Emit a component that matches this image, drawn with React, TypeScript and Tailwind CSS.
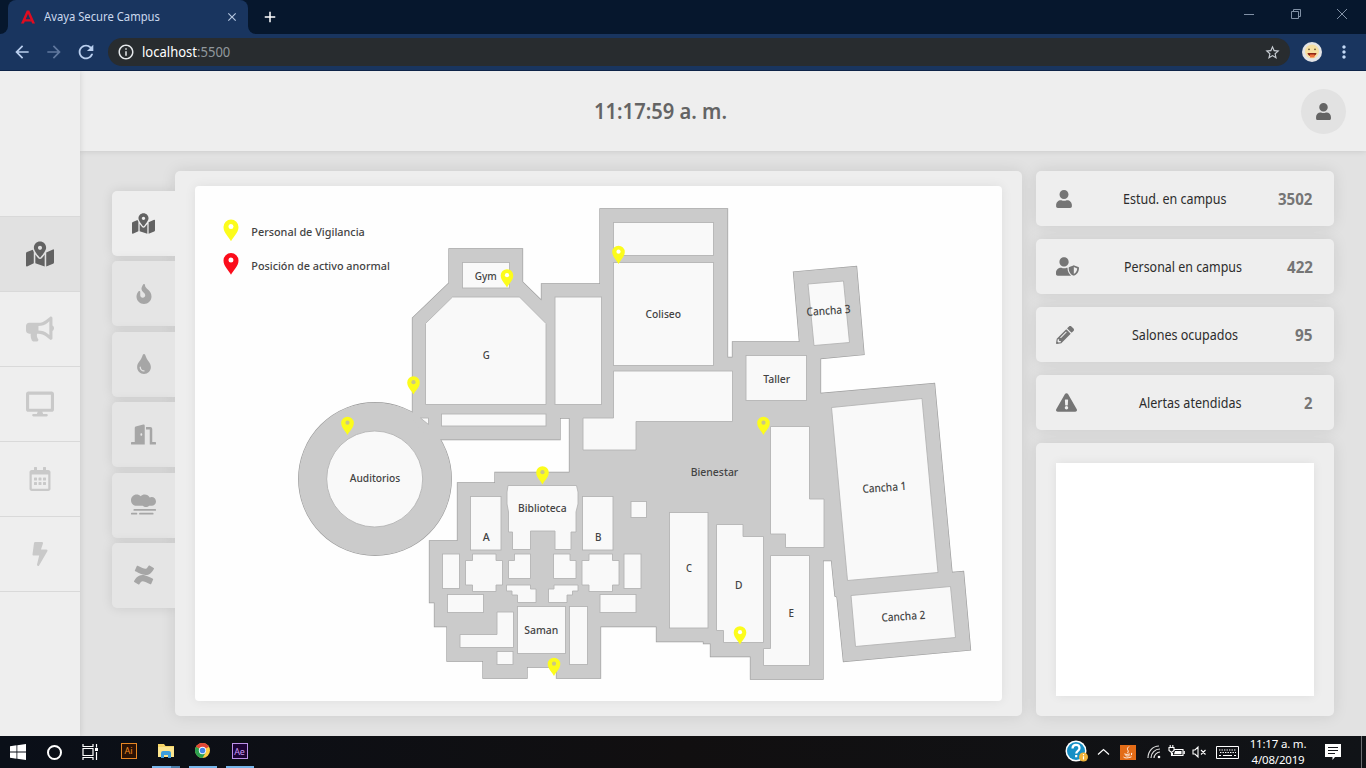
import React from "react";
import {
  FaMapMarkedAlt, FaBullhorn, FaDesktop, FaRegCalendarAlt, FaBolt, FaFire, FaTint, FaDoorOpen,
  FaSmog, FaConfluence, FaUser, FaUserShield, FaPencilAlt, FaExclamationTriangle,
} from "react-icons/fa";
import { MdArrowBack, MdArrowForward, MdRefresh, MdInfoOutline, MdStarBorder, MdMoreVert, MdClose, MdAdd } from "react-icons/md";

const WALL = "#cbcbcb";
const EDGE = "#9e9e9e";

const campus =
  "449,249 522.5,249 522.5,282 541.5,300.5 541.5,284 600,284 600,209 727.5,209 727.5,357.5 732.5,357.5 732.5,342 799.5,342 793.5,272 856.5,266.5 864,354.5 820.5,358.5 820.5,393.5 934.5,383.5 952,572.5 963.5,571.5 970.5,650 843.5,661.5 837,597 835,596 831.5,560.5 823,560.5 823,679 750.5,679 750.5,656.5 710.5,656.5 710.5,643.5 703.5,643.5 703.5,641.5 656.5,641.5 656.5,626.5 600.5,626.5 600.5,678 556.5,678 556.5,667 527,667 527,678 483,678 483,661 447,661 447,626.5 434.5,626.5 434.5,602.5 429.5,602.5 429.5,541 457.5,541 457.5,483 495,483 495,472.5 569.5,472.5 569.5,418 560,418 560,439.5 430,439.5 412.5,420 412.5,318 449,283";

const rooms: string[] = [
  "452.5,297 519.5,297 546,323.5 546,404.5 425.5,404.5 425.5,323.5",
  "613.5,371 732.5,371 732.5,421.5 636,421.5 636,450 583,450 583,418 613.5,418",
  "808,284 843.5,281 849.5,342.5 814,345.5",
  "831.5,407.5 922,398.5 938,572.5 847.5,580.5",
  "851,595.5 950.5,586.5 955.5,637.5 855.5,646.5",
  "770.5,426.5 809.5,426.5 809.5,499 824,499 824,547.5 785.5,547.5 785.5,534 770.5,534",
  "716.5,524.5 743,524.5 743,536.5 763.5,536.5 763.5,642.5 723.5,642.5 723.5,630.5 716.5,630.5",
  "770.5,555.5 809.5,555.5 809.5,665.5 763.5,665.5 763.5,648.5 770.5,648.5",
  "508,485.5 576.5,485.5 578,492 578,504 576,512 576,532 571,532 571,549.5 555,549.5 555,531 530.5,531 530.5,549.5 512.5,549.5 512.5,532 508.5,532 508.5,512 507,504 507,492",
  "472.5,554 496,554 496,560.5 502.5,560.5 502.5,585 496,585 496,591.5 472.5,591.5 472.5,585 465.5,585 465.5,560.5 472.5,560.5",
  "589,554 612.5,554 612.5,560.5 619,560.5 619,585 612.5,585 612.5,591.5 589,591.5 589,585 582,585 582,560.5 589,560.5",
  "514.5,554 530.5,554 530.5,578.5 508.5,578.5 508.5,560.5 514.5,560.5",
  "553.5,554 570,554 570,560.5 576,560.5 576,578.5 553.5,578.5",
  "506.5,585 530.5,585 530.5,589 536,589 536,602.5 517.5,602.5 517.5,595 512,595 512,591 506.5,591",
  "578,585 554,585 554,589 548.5,589 548.5,602.5 567,602.5 567,595 572.5,595 572.5,591 578,591",
  "497,612 513.5,612 513.5,647.5 460,647.5 460,634.5 497,634.5",
];

// x1, y1, x2, y2
const boxes: number[][] = [
  [462.5, 262.5, 509.5, 288], [555, 297, 601.5, 404.5], [441.5, 414, 546, 426],
  [613.5, 222.5, 713.5, 255.5], [613.5, 262.5, 713.5, 365.5], [746, 355.5, 806.5, 400.5],
  [669.5, 512.5, 708, 628], [470.5, 496.5, 501, 550], [582.5, 496.5, 613, 550],
  [631, 501.5, 646.5, 517.5], [442.5, 554, 459.5, 588.5], [624, 554, 641, 588.5],
  [447.5, 594.5, 483.5, 612.5], [600, 594.5, 636, 612.5], [497, 651.5, 513, 664.5],
  [517.5, 606.5, 565.5, 653.5], [569.5, 606.5, 587.5, 664.5],
];

// label, centre x, baseline y, width, rotation
const labels: [string, number, number, number, number][] = [
  ["Gym", 485.7, 279.5, 22, 0], ["G", 486.2, 359, 7, 0], ["Coliseo", 663.3, 318, 35.5, 0],
  ["Cancha 3", 828.5, 314.5, 44, -4], ["Taller", 776.7, 382.7, 27, 0], ["Auditorios", 375, 482, 50.5, 0],
  ["Bienestar", 714.5, 476, 47.5, 0], ["Cancha 1", 884.3, 491.5, 44, -4], ["Biblioteca", 542.3, 512, 48.5, 0],
  ["A", 486.3, 541.3, 7, 0], ["B", 598.3, 541.3, 6.5, 0], ["C", 689, 571.5, 6, 0], ["D", 738.8, 589, 7.5, 0],
  ["E", 791.2, 616.6, 5.5, 0], ["Saman", 541.3, 634, 34, 0], ["Cancha 2", 903.3, 620.3, 44, -4],
];

const guards = [[507, 278.5], [618.5, 255], [413.5, 385.5], [347.5, 426], [763.5, 426], [542.5, 475.5], [740, 635.5], [554, 667]];

function Pin({ x, y, s = 1, color, hole }: { x: number; y: number; s?: number; color: string; hole: string }) {
  return (
    <g transform={`translate(${x} ${y}) scale(${s})`}>
      <path d="M0 9C-1.6 5.500-6.300 2-6.300-3A6.300 6.300 0 0 1 6.300-3C6.300 2 1.600 5.500 0 9Z" fill={color} />
      <circle cx="0" cy="-3.300" r="2.100" fill={hole} />
    </g>
  );
}

function CampusMap() {
  return (
    <svg className="block h-[515px] w-[807px]" viewBox="195 186 807 515" fontFamily="'Noto Sans', sans-serif" fontWeight="500" fontSize="11.500" fill="#434343">
      <circle cx="375" cy="479" r="76.300" fill="none" stroke={EDGE} strokeWidth="1.300" />
      <polygon points={campus} fill="none" stroke={EDGE} strokeWidth="1.300" />
      <circle cx="375" cy="479" r="76.300" fill={WALL} />
      <polygon points={campus} fill={WALL} />
      <g fill="#f9f9f9" stroke="#b4b4b4" strokeWidth="0.900">
        <circle cx="374.700" cy="479" r="48" />
        <polygon points="420.5,418 428.5,418 428.5,424.5" />
        {rooms.map((p) => <polygon key={p} points={p} />)}
        {boxes.map(([a, b, c, d]) => <rect key={`${a}-${b}`} x={a} y={b} width={c - a} height={d - b} />)}
      </g>
      {labels.map(([t, x, y, w, r]) => (
        <text key={t} x={x - w / 2} y={y} textLength={w} lengthAdjust="spacingAndGlyphs" transform={`rotate(${r} ${x} ${y - 4})`}>{t}</text>
      ))}
      <text x="251.300" y="236" textLength="113.500" lengthAdjust="spacingAndGlyphs">Personal de Vigilancia</text>
      <text x="251.300" y="269.500" textLength="138.500" lengthAdjust="spacingAndGlyphs">Posición de activo anormal</text>
      {guards.map(([x, y]) => <Pin key={x} x={x} y={y} color="#fcfc1c" hole={y < 300 || x === 740 ? "#ffffff" : "#c9c787"} />)}
      <Pin x={231} y={230.5} s={1.19} color="#fcfc1c" hole="#ffffff" />
      <Pin x={231} y={264} s={1.19} color="#fb0d1b" hole="#ffffff" />
    </svg>
  );
}

function Browser() {
  return (
    <div className="h-[71px] border-b border-[#0d2347] bg-[#19355f] font-['Noto_Sans',sans-serif]">
      <div className="flex h-[34px] bg-[#06172d]">
        <div className="flex h-[34px] w-2 bg-[#19355f]"><div className="h-full w-2 rounded-br-lg bg-[#06172d]" /></div>
        <div className="flex w-60 items-center rounded-t-lg bg-[#19355f] pl-[13px] pr-[9px]">
          <svg className="h-[14px] w-[14px]" viewBox="0 0 14 14"><path d="M0 13.500 5.800.500h2.400L14 13.500h-2.800L7 3.800 4.700 9.300h4.500l1 2.300H3.800l-.9 1.900z" fill="#e00c20" /></svg>
          <span className="ml-[9px] origin-left scale-x-[.937] whitespace-nowrap text-[12px] text-[#cbd9ee]">Avaya Secure Campus</span>
          <MdClose className="ml-auto h-[14px] w-[14px] text-[#b5c6df]" />
        </div>
        <div className="flex h-[34px] w-2 bg-[#19355f]"><div className="h-full w-2 rounded-bl-lg bg-[#06172d]" /></div>
        <MdAdd className="ml-[5px] mt-[8px] h-[18px] w-[18px] text-white" />
        <svg className="ml-auto mr-[17px] mt-2 h-3 w-[106px]" viewBox="0 0 106 12" fill="none" stroke="#8090a5" strokeWidth="1">
          <path d="M1 6.500h10M48.500 3.500h7v7h-7zM50.500 3.500v-2h7v7h-2M94 1l10 10M104 1 94 11" />
        </svg>
      </div>
      <div className="flex h-9 items-center">
        <MdArrowBack className="ml-3 h-5 w-5 text-[#b9cfef]" />
        <MdArrowForward className="ml-3 h-5 w-5 text-[#60789e]" />
        <MdRefresh className="ml-[11px] h-[22px] w-[22px] text-[#b9cfef]" />
        <div className="ml-[11px] flex h-7 w-[1182px] items-center rounded-full bg-[#282c2f]">
          <MdInfoOutline className="ml-[9px] h-[18px] w-[18px] text-[#e5e8eb]" />
          <span className="ml-[7px] origin-left scale-x-[.93] text-[14px] leading-[22px] text-[#91989d]"><span className="text-white">localhost</span>:5500</span>
          <MdStarBorder className="ml-auto mr-[9px] h-[17px] w-[17px] text-[#c8cdd3]" />
        </div>
        <svg className="ml-3 h-5 w-5" viewBox="0 0 20 20">
          <circle cx="10" cy="10" r="10" fill="#e3e4e6" /><circle cx="10" cy="9.500" r="7" fill="#f6dfa1" />
          <path d="M5.500 11h9c-.5 4.500-8.500 4.500-9 0" fill="#8d2415" /><path d="M8 12.500h4.500v3H8z" fill="#ee703c" />
          <circle cx="7" cy="7.300" r=".9" fill="#69542e" /><circle cx="13" cy="7.300" r=".9" fill="#69542e" />
        </svg>
        <MdMoreVert className="ml-3 h-5 w-5 text-[#c3d9f5]" />
      </div>
    </div>
  );
}

const navItems = [
  { I: FaMapMarkedAlt, c: "h-7 w-7" }, { I: FaBullhorn, c: "h-7 w-7" }, { I: FaDesktop, c: "h-7 w-7" },
  { I: FaRegCalendarAlt, c: "h-6 w-6" }, { I: FaBolt, c: "h-6 w-6" },
];
const tabItems = [
  { I: FaMapMarkedAlt, c: "h-[23px] w-[23px]" }, { I: FaFire, c: "h-5 w-5" }, { I: FaTint, c: "h-5 w-5" },
  { I: FaDoorOpen, c: "h-[25px] w-[25px]" }, { I: FaSmog, c: "-mt-0.5 h-[25px] w-[25px]" }, { I: FaConfluence, c: "h-5 w-5" },
];
const stats = [
  { I: FaUser, c: "h-[18px] w-4", t: "Estud. en campus", n: "3502", len: 103.5, nw: 34.5 },
  { I: FaUserShield, c: "h-[23px] w-[23px]", t: "Personal en campus", n: "422", len: 118, nw: 26 },
  { I: FaPencilAlt, c: "h-[18px] w-[18px]", t: "Salones ocupados", n: "95", len: 106, nw: 17.5 },
  { I: FaExclamationTriangle, c: "h-[21px] w-[21px]", t: "Alertas atendidas", n: "2", len: 102.5, nw: 8.5 },
];

function Fit({ width, size, weight, color, y = 16, children }: { width: number; size: number; weight: number; color: string; y?: number; children: string }) {
  return (
    <svg className="block overflow-visible" width={width} height="22" fontFamily="'Noto Sans', sans-serif">
      <text x="0" y={y} fontSize={size} fontWeight={weight} fill={color} textLength={width} lengthAdjust="spacingAndGlyphs">{children}</text>
    </svg>
  );
}

function Taskbar() {
  return (
    <div className="flex h-8 items-stretch bg-linear-to-r from-[#0a0f18] via-[#110f10] to-[#101317] font-['Noto_Sans',sans-serif] text-white">
      <div className="flex w-9 items-center justify-center"><svg className="h-4 w-4" viewBox="0 0 16 16" fill="white"><path d="M0 2.300 6.500 1.300V7.600H0zM7.300 1.200 16 0v7.600H7.300zM0 8.400h6.500v6.300L0 13.800zM7.300 8.400H16V16l-8.700-1.200z" /></svg></div>
      <div className="flex w-9 items-center justify-center"><div className="h-[15px] w-[15px] rounded-full border-2 border-white" /></div>
      <div className="flex w-9 items-center justify-center">
        <svg className="h-4 w-[17px]" viewBox="0 0 17 16" fill="none" stroke="white" strokeWidth="1.200"><path d="M1 0v2.500h10V0M1 4.500h10v7H1zM1 16v-2.500h10V16M14.500 0v3.500M14.500 8v8" /><path d="M13 4h3v3h-3z" fill="white" stroke="none" /></svg>
      </div>
      <div className="ml-[2px] flex w-[37px] items-center justify-center pb-[3px]"><div className="flex h-4 w-4 items-center justify-center border border-[#e88723] bg-[#2b1204] text-[9px] leading-none text-[#f08a20]">Ai</div></div>
      <div className="flex w-[37px] flex-col items-center justify-between pt-[6px]">
        <svg className="h-[18px] w-[18px]" viewBox="0 0 18 18"><path d="M1 2h6l1.500 2H17v11H1z" fill="#f6d466" /><path d="M1 5h16v10H1z" fill="#fce58e" /><path d="M4 16v-5q0-2 2-2h6q2 0 2 2v5h-3v-3H7v3z" fill="#3d9fdc" /></svg>
        <div className="flex h-0.5 w-7 bg-[#76b5ea]"><div className="ml-auto w-[9px] bg-[#4a7da8]" /></div>
      </div>
      <div className="flex w-[37px] flex-col items-center justify-between pt-[7px]">
        <svg className="h-[15px] w-[15px]" viewBox="0 0 16 16"><circle cx="8" cy="8" r="8" fill="#ffce42" /><path d="M8 8 1.070 4A8 8 0 0 1 14.930 4z" fill="#e04636" /><path d="M8 8 1.070 4A8 8 0 0 0 8 16l3.500-6z" fill="#2da04f" /><circle cx="8" cy="8" r="3.900" fill="white" /><circle cx="8" cy="8" r="3" fill="#4285e8" /></svg>
        <div className="h-0.5 w-7 bg-[#76b5ea]" />
      </div>
      <div className="flex w-[37px] flex-col items-center justify-between pt-[7px]">
        <div className="flex h-4 w-4 items-center justify-center border border-[#bd91e8] bg-[#1d0335] text-[9px] leading-none tracking-tight text-[#c998f4]">Ae</div>
        <div className="h-0.5 w-7 bg-[#76b5ea]" />
      </div>
      <div className="ml-auto flex items-center">
        <svg className="h-6 w-6" viewBox="0 0 24 24"><circle cx="11" cy="11" r="10.500" fill="#fff" /><circle cx="11" cy="11" r="9" fill="#168fc5" /><path d="M7.500 8.500c0-5 7-4.500 7-.5 0 3-3.200 2.500-3.300 5.500M11.200 15v2.200" fill="none" stroke="white" strokeWidth="2.200" /><circle cx="18.500" cy="17" r="4.500" fill="#f0b339" /><path d="M18.500 14v1.300M18.500 16.200v3.300" stroke="white" strokeWidth="1.200" /></svg>
        <svg className="ml-[8px] h-[14px] w-[13px]" viewBox="0 0 13 14"><path d="m1 9.500 5.500-5 5.500 5" fill="none" stroke="white" strokeWidth="1.200" /></svg>
        <svg className="ml-[10px] h-[15px] w-[16px]" viewBox="0 0 16 15"><path d="M0 0h16v15H0z" fill="#e36c17" /><path d="M9 1.500C5 5 10 5 7.500 8M5 8.500q-2 1.500 5 .5M5.500 10.500q1 1 4 .2M3.500 12q2 2 8-.2M11 8q2 .5 0 2.200" fill="none" stroke="white" strokeWidth=".9" /></svg>
        <svg className="ml-[11px] h-[14px] w-[14px]" viewBox="0 0 14 14" fill="none" stroke="#dedede" strokeWidth="1.200"><path d="M1 13C1 6 6 1 12 1M4 13c0-5 4-9 9-9M7 13c0-3 3-6 6-6" /><circle cx="12" cy="12" r="1.300" fill="white" stroke="none" /></svg>
        <svg className="ml-[7px] h-[14px] w-[17px]" viewBox="0 0 17 14" fill="none" stroke="white" strokeWidth="1.100"><path d="M6 4.500h9v6H4.500V8M16.300 6v3M1 2.500h5v3L3.500 7.500 1 5.500zM2.200 0v2.500M4.800 0v2.500M3.500 7v4" /><path d="M7 6h6.500v3.200H6z" fill="white" stroke="none" /></svg>
        <svg className="ml-[7px] h-[14px] w-[15px]" viewBox="0 0 15 14" fill="none" stroke="white" strokeWidth="1.100"><path d="M1 5h2l3-3v10L3 9H1zM9 5l4.500 4.500M13.500 5 9 9.500" /></svg>
        <svg className="ml-[9px] h-[13px] w-[23px]" viewBox="0 0 23 13" fill="none" stroke="white"><path d="M.5.500h22v12H.5z" /><path d="M3 4h17M4 6.500h16" strokeWidth="1.200" strokeDasharray="1.400 1.100" /><path d="M3 9.500h2M7 9.500h9M18 9.500h2" /></svg>
        <div className="ml-[10px] flex w-[58px] flex-col items-center text-[11.500px] leading-[16px] tracking-[-0.200px]"><span className="whitespace-nowrap">11:17 a. m.</span><span className="whitespace-nowrap">4/08/2019</span></div>
        <svg className="ml-[18px] mr-5 h-4 w-4" viewBox="0 0 16 16"><path d="M0 0h16v13H10l-2.500 3V13H0z" fill="white" /><path d="M3 3.500h10M3 6.500h10M3 9.500h7" stroke="#15171c" strokeWidth="1.100" /></svg>
        <div className="mr-1 h-8 w-px bg-[#6c6e72]" />
      </div>
    </div>
  );
}

export default function App() {
  return (
    <div className="flex h-[768px] w-[1366px] flex-col overflow-hidden bg-[#e2e2e2]">
      <Browser />
      <div className="flex h-[665px] overflow-hidden">
        <aside className="z-20 flex w-20 shrink-0 flex-col bg-[#eee] pt-[145px] shadow-[0_0_6px_rgba(0,0,0,0.13)]">
          {navItems.map(({ I, c }, i) => (
            <div key={i} className={i === 0
              ? "flex h-[75px] items-center justify-center border-t border-[#d9d9d9] bg-[#e1e1e1] text-[#626262]"
              : "flex h-[75px] items-center justify-center border-t border-[#d9d9d9] text-[#c9c9c9]"}><I className={c} /></div>
          ))}
          <div className="border-t border-[#d9d9d9]" />
        </aside>
        <div className="flex flex-1 flex-col">
          <header className="z-10 flex h-20 shrink-0 items-center bg-[#eee] shadow-[0_0_6px_rgba(0,0,0,0.13)]">
            <div className="ml-[514px]"><Fit width={133} size={20.8} weight={600} color="#646464" y={19}>11:17:59 a. m.</Fit></div>
            <div className="ml-auto mr-5 flex h-[45px] w-[45px] items-center justify-center rounded-full bg-[#e2e2e2] text-[#646464]"><FaUser className="h-[17px] w-[15px]" /></div>
          </header>
          <div className="flex pt-5">
            <nav className="z-10 ml-8 mt-5 flex w-[63px] shrink-0 flex-col gap-[5.400px] self-start [clip-path:inset(-20px_0_-20px_-20px)]">
              {tabItems.map(({ I, c }, i) => (
                <div key={i} className={i === 0
                  ? "flex h-[65px] items-center justify-center rounded-l-[5px] bg-[#eee] text-[#626262] shadow-[0_0_12px_rgba(0,0,0,0.1)]"
                  : "flex h-[65px] items-center justify-center rounded-l-[5px] bg-[#e5e5e5] text-[#a6a6a6] shadow-[0_0_12px_rgba(0,0,0,0.1)]"}><I className={c} /></div>
              ))}
            </nav>
            <main className="h-[545px] w-[847px] shrink-0 rounded-[5px] bg-[#eee] px-5 py-[15px] shadow-[0_0_15px_rgba(0,0,0,0.1)]">
              <div className="overflow-hidden rounded bg-[#fefefe] shadow-[0_0_12px_rgba(0,0,0,0.07)]"><CampusMap /></div>
            </main>
            <section className="ml-[14px] flex w-[298px] shrink-0 flex-col gap-[13px]">
              {stats.map(({ I, c, t, n, len, nw }) => (
                <div key={t} className="flex h-[55px] items-center justify-between rounded-[5px] bg-[#eee] pl-5 pr-[21.500px] text-[#757575] shadow-[0_0_15px_rgba(0,0,0,0.1)]">
                  <I className={c} />
                  <Fit width={len} size={13.8} weight={400} color="#2c2c2c" y={16.3}>{t}</Fit>
                  <Fit width={nw} size={15.2} weight={700} color="#757575" y={16.7}>{n}</Fit>
                </div>
              ))}
              <div className="h-[273px] rounded-[5px] bg-[#eee] p-5 shadow-[0_0_15px_rgba(0,0,0,0.1)]">
                <div className="h-full bg-white shadow-[0_0_10px_rgba(0,0,0,0.07)]" />
              </div>
            </section>
          </div>
        </div>
      </div>
      <Taskbar />
    </div>
  );
}
